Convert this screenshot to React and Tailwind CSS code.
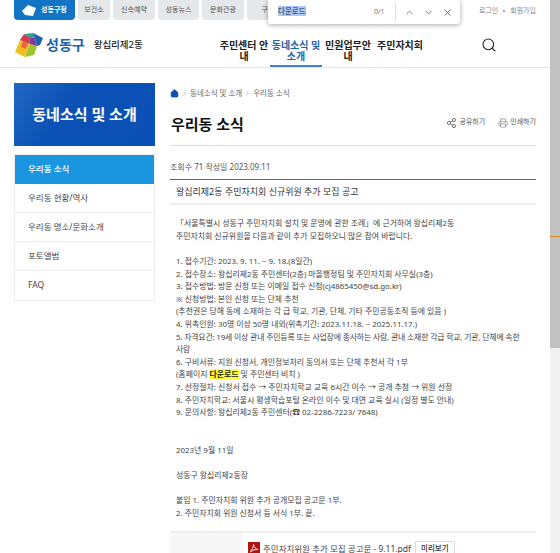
import { ChevronUp, ChevronDown, X, Search, Home, ChevronRight, Printer } from 'lucide-react';

const kr = "font-['Noto_Sans','Noto_Sans_CJK_KR',sans-serif]";

const topTabs = [
  { label: '보건소', w: 'w-[32px]' },
  { label: '신속예약', w: 'w-[42px]' },
  { label: '성동뉴스', w: 'w-[41px]' },
  { label: '문화관광', w: 'w-[42px]' },
  { label: '구역', w: 'w-[42px]' },
];

const menu = ['우리동 현황/역사', '우리동 명소/문화소개', '포토앨범', 'FAQ'];

const navItems = [
  { label: '주민센터 안내', w: 'w-[52px]' },
  { label: '동네소식 및 소개', w: 'w-[52px]', active: true },
  { label: '민원업무안내', w: 'w-[52px]' },
  { label: '주민자치회', w: 'w-[52px]' },
];

const lines = [
  '「서울특별시 성동구 주민자치회 설치 및 운영에 관한 조례」에 근거하여 왕십리제2동',
  '주민자치회 신규위원을 다음과 같이 추가 모집하오니 많은 참여 바랍니다.',
  '',
  '1. 접수기간: 2023. 9. 11. ~ 9. 18.(8일간)',
  '2. 접수장소: 왕십리제2동 주민센터(2층) 마을행정팀 및 주민자치회 사무실(3층)',
  '3. 접수방법: 방문 신청 또는 이메일 접수 신청(cj4865450@sd.go.kr)',
  '※ 신청방법: 본인 신청 또는 단체 추천',
  '(추천권은 당해 동에 소재하는 각 급 학교, 기관, 단체, 기타 주민공동조직 등에 있음 )',
  '4. 위촉인원: 30명 이상 50명 내외(위촉기간: 2023.11.18. ~ 2025.11.17.)',
  'Q5',
  '6. 구비서류: 지원 신청서, 개인정보처리 동의서 또는 단체 추천서 각 1부',
  'HL',
  '7. 선정절차: 신청서 접수 → 주민자치학교 교육 6시간 이수 → 공개 추첨 → 위원 선정',
  '8. 주민자치학교: 서울시 평생학습포털 온라인 이수 및 대면 교육 실시 (일정 별도 안내)',
  '9. 문의사항: 왕십리제2동 주민센터(☎ 02-2286-7223/ 7648)',
  '',
  '',
  '2023년 9월 11일',
  '',
  '성동구 왕십리제2동장',
  '',
  '붙임 1. 주민자치회 위원 추가 공개모집 공고문 1부.',
  '2. 주민자치회 위원 신청서 등 서식 1부. 끝.',
];

const Logo = () => (
  <svg width="28" height="24" viewBox="0 0 28 24" className="shrink-0">
    <polygon points="0,19 5,7 15,11 10,24" fill="#f0c020" />
    <polygon points="10,24 15,11 22,13 19,22" fill="#9cc62b" />
    <polygon points="5,7 9,1 14,4 15,11" fill="#d8364a" />
    <polygon points="9,1 18,0 20,5 14,4" fill="#2f9e8f" />
    <polygon points="14,4 20,5 22,13 15,11" fill="#7d3f98" />
    <polygon points="18,0 28,5 25,12 22,13 20,5" fill="#1d5fb0" />
    <polygon points="8,8 13,10 11,16 6,14" fill="#e8644a" />
  </svg>
);

const ShareIcon = () => (
  <svg width="9" height="10" viewBox="0 0 9 10" fill="none" stroke="#555" strokeWidth="0.8">
    <circle cx="2" cy="5" r="1.6" />
    <circle cx="7" cy="2" r="1.6" />
    <circle cx="7" cy="8" r="1.6" />
    <path d="M3.4 4.2 5.6 2.8M3.4 5.8 5.6 7.2" />
  </svg>
);

const PdfIcon = () => (
  <svg width="12" height="12" viewBox="0 0 12 12" className="shrink-0">
    <rect width="12" height="12" fill="#b3120f" />
    <path d="M2 10C4 8 5.5 5 5.5 2.5 6 5 7.5 7 10 7.5 7.5 7.5 4.5 8 2 10Z" fill="none" stroke="#fff" strokeWidth="0.9" />
  </svg>
);

export default function App() {
  return (
    <div className={`relative flex h-[553px] w-[560px] overflow-hidden bg-white ${kr}`}>
      <div className="w-[550px] shrink-0">
        {/* Top tabs */}
        <div className="flex h-[24px] items-start justify-between pl-[14px] pr-[14px]">
          <div className="flex gap-[3px]">
            <div className="flex h-[20px] w-[61px] items-center gap-[5px] rounded-b-[4px] bg-[#1174c4] pl-[8px] text-[7px] font-bold text-white">
              <svg width="14" height="11" viewBox="0 0 14 11"><polygon points="0,6 6,0 14,3 11,11 3,10" fill="#fff" /></svg>
              <span>성동구청</span>
            </div>
            {topTabs.map((t) => (
              <div key={t.label} className={`flex h-[20px] ${t.w} items-center justify-center rounded-b-[4px] bg-[#e5e8eb] text-[7px] text-[#555]`}>
                {t.label}
              </div>
            ))}
          </div>
          <div className="flex items-center gap-[5px] pt-[6px] text-[7px] text-[#888]">
            <span>로그인</span>
            <span className="h-[2px] w-[2px] rounded-full bg-[#888]" />
            <span>회원가입</span>
          </div>
        </div>

        {/* Header */}
        <div className="flex h-[44px] items-start border-b border-[#e6e6e6] pl-[15px]">
          <div className="flex w-[203px] items-center pt-[9px]">
            <Logo />
            <span className="ml-[3px] text-[14px] leading-[20px] font-bold text-[#1c63ad]">성동구</span>
            <span className="ml-[9px] text-[9.5px] font-medium text-[#222]">왕십리제2동</span>
          </div>
          <div className="flex">
            {navItems.map((n) => (
              <div
                key={n.label}
                className={`${n.w} h-[43px] pt-[16px] text-center text-[10px] leading-[11px] font-bold ${n.active ? 'border-b-2 border-[#3f7fd6] text-[#1c63ad]' : 'text-[#222]'}`}
              >
                {n.label}
              </div>
            ))}
          </div>
          <Search size={16} strokeWidth={1.6} className="ml-[55px] mt-[13px] text-[#222]" />
        </div>

        <div className="flex pl-[14px] pt-[15px]">
          {/* Sidebar */}
          <div className="w-[141px] shrink-0">
            <div className="flex h-[63px] items-center justify-center bg-[linear-gradient(120deg,#2267c4_0%,#0c52b6_35%,#0a4fb4_100%)] text-[15px] font-bold text-white">
              동네소식 및 소개
            </div>
            <div className="mt-[8px] border border-[#ececec]">
              <div className="flex h-[29px] items-center bg-[#1a96e0] pl-[13px] text-[8.5px] font-medium text-white">우리동 소식</div>
              {menu.map((m) => (
                <div key={m} className="flex h-[29px] items-center border-b border-[#ececec] pl-[13px] text-[8.5px] text-[#444] last:border-b-0">
                  {m}
                </div>
              ))}
            </div>
          </div>

          {/* Content */}
          <div className="ml-[15px] w-[366px]">
            <div className="flex items-center gap-[2px] pt-[5px] text-[7.5px] text-[#666]">
              <Home size={9} fill="#0b4fb3" className="text-[#0b4fb3]" />
              <ChevronRight size={7} className="text-[#999]" />
              <span>동네소식 및 소개</span>
              <ChevronRight size={7} className="text-[#999]" />
              <span>우리동 소식</span>
            </div>
            <div className="mt-[13px] flex h-[34px] items-start justify-between border-b border-[#dcdcdc] pl-[1px]">
              <h1 className="text-[15px] leading-[24px] font-bold text-[#111]">우리동 소식</h1>
              <div className="flex items-center gap-[13px] pt-[5px] text-[7px] text-[#555]">
                <span className="flex items-center gap-[3px]"><ShareIcon />공유하기</span>
                <span className="flex items-center gap-[2px]"><Printer size={10} strokeWidth={1.2} />인쇄하기</span>
              </div>
            </div>
            <div className="flex h-[34px] items-center border-b border-[#666] pt-[8px] text-[8px] text-[#555]">
              조회수 71 작성일 2023.09.11
            </div>
            <div className="flex h-[25px] items-center border-b-2 border-[#eeeeee] pl-[6px] text-[9px] text-[#333]">
              왕십리제2동 주민자치회 신규위원 추가 모집 공고
            </div>
            <div className="break-keep px-[6px] pt-[12px] pb-[11px] text-[7.9px] leading-[12.6px] text-[#444]">
              {lines.map((l, i) => {
                if (l === 'HL') {
                  return (
                    <div key={i}>
                      (홈페이지 <span className="bg-[#ffff33] font-bold text-[#222]">다운로드</span> 및 주민센터 비치 )
                    </div>
                  );
                }
                if (l === 'Q5') {
                  // this one runs a bit tighter in the reference, so 속한 stays on the first row
                  return (
                    <div key={i} className="tracking-[-0.17px]">
                      5. 자격요건: 19세 이상 관내 주민등록 또는 사업장에 종사하는 사람, 관내 소재한 각급 학교, 기관, 단체에 속한 사람
                    </div>
                  );
                }
                return <div key={i} className="min-h-[12.6px]">{l}</div>;
              })}
            </div>
            <div className="flex h-[40px] border-t-2 border-[#eeeeee]">
              <div className="w-[73px] shrink-0 bg-[#f7f7f7]" />
              <div className="flex items-start gap-[3px] pl-[5px] pt-[9px] text-[8.5px] text-[#444]">
                <PdfIcon />
                <span className="leading-[13px]">주민자치위원 추가 모집 공고문 - 9.11.pdf</span>
                <span className="ml-[1px] -mt-[1px] border border-[#ddd] px-[5px] py-[1px] text-[7.5px] font-medium text-[#333]">미리보기</span>
              </div>
            </div>
          </div>
        </div>
      </div>

      {/* Scrollbar */}
      <div className="relative w-[10px] shrink-0 bg-[#f1f1f1]">
        <div className="h-[348px] bg-[#c1c1c1]" />
        <div className="absolute left-0 right-0 top-[236px] h-[1px] bg-[#d98a1e]" />
      </div>

      {/* Browser find bar */}
      <div className="absolute left-[268px] top-0 flex h-[24px] w-[192px] items-center rounded-b-[3px] bg-white pl-[10px] text-[#666] shadow-[0_1px_5px_rgba(0,0,0,0.35)]">
        <span className="w-[96px] text-[7.5px] text-[#333]"><span className="bg-[#a8c7fa]">다운로드</span></span>
        <span className="w-[20px] text-[7px] text-[#777]">0/1</span>
        <span className="ml-[1px] h-[18px] w-px bg-[#e2e2e2]" />
        <ChevronUp size={11} strokeWidth={1.8} className="ml-[8px]" />
        <ChevronDown size={11} strokeWidth={1.8} className="ml-[8px]" />
        <X size={11} strokeWidth={1.8} className="ml-[8px]" />
      </div>
    </div>
  );
}
